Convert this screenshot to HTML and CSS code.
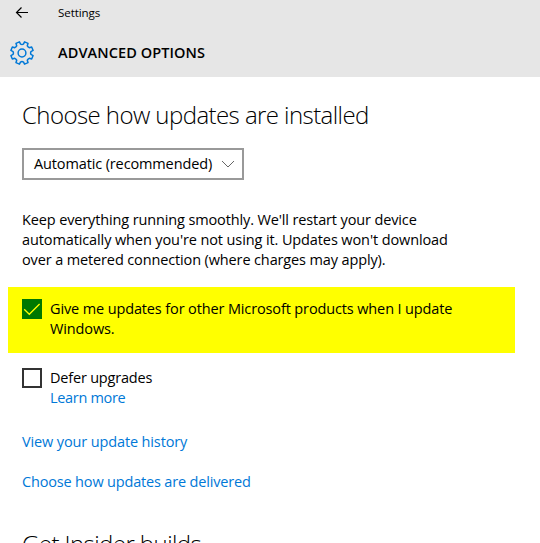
FILE: index.html
```
<!DOCTYPE html>
<html lang="en">
<head>
  <meta charset="UTF-8">
  <meta name="viewport" content="width=device-width, initial-scale=1.0">
  <title>Settings</title>
  <link rel="stylesheet" href="styles.css">
</head>
<body>
  <header class="header">
    <div class="titlebar">
      <svg class="back" width="14" height="12" viewBox="0 0 14 12">
        <path d="M13 5.5H1.5M6.5 0.5L1.5 5.5L6.5 10.5" />
      </svg>
      <span class="app-name">Settings</span>
    </div>
    <div class="page-title">
      <svg class="gear" width="26" height="26" viewBox="-13 -13 26 26">
        <path id="gear-path" d="" />
        <circle r="3.9" />
      </svg>
      <h1>ADVANCED OPTIONS</h1>
    </div>
  </header>

  <main class="content">
    <h2 class="heading-install">Choose how updates are installed</h2>
    <div class="select">
      <span>Automatic (recommended)</span>
      <svg width="14" height="8" viewBox="0 0 14 8">
        <path d="M1 1L7 7L13 1" />
      </svg>
    </div>

    <p class="description">
      Keep everything running smoothly. We'll restart your device<br>
      <span class="line2">automatically when you're not using it. Updates won't download</span><br>
      over a metered connection (where charges may apply).
    </p>

    <div class="option highlight">
      <span class="checkbox checked">
        <svg width="20" height="20" viewBox="0 0 20 20">
          <path d="M2.2 10.2L7.3 15.3L17.6 5" />
        </svg>
      </span>
      <div>Give me updates for other Microsoft products when I update<br>Windows.</div>
    </div>

    <div class="option">
      <span class="checkbox"></span>
      <div class="defer">Defer upgrades<br><a href="#" class="learn">Learn more</a></div>
    </div>

    <a href="#" class="link history">View your update history</a>
    <a href="#" class="link delivery">Choose how updates are delivered</a>

    <h2 class="heading-insider">Get Insider builds</h2>
  </main>

  <script>
    // gear outline
    const teeth = 8;
    const profile = [[-0.5, 8.6], [-0.3, 9], [-0.21, 11.4], [0.21, 11.4], [0.3, 9]];
    const points = [];
    for (let i = 0; i < teeth; i++) {
      for (const [offset, radius] of profile) {
        const angle = (i + 0.5 + offset) * 2 * Math.PI / teeth;
        points.push((radius * Math.sin(angle)).toFixed(2) + ' ' + (-radius * Math.cos(angle)).toFixed(2));
      }
    }
    document.getElementById('gear-path').setAttribute('d', 'M' + points.join('L') + 'Z');
  </script>
</body>
</html>
```
FILE: styles.css
```
* {
  box-sizing: border-box;
}

body {
  margin: 0;
  height: 543px;
  overflow: hidden;
  font-family: "Open Sans", "Noto Sans", sans-serif;
  font-size: 14.5px;
  line-height: 20px;
  letter-spacing: -0.13px;
  color: #000;
  background-color: #fff;
}

svg {
  display: block;
  fill: none;
}

h1, h2, p {
  margin: 0;
}

.header {
  height: 77px;
  background-color: #e6e6e6;
}

.titlebar {
  display: flex;
  align-items: center;
  height: 26px;
  padding-left: 15px;
}

.back {
  stroke: #000;
  stroke-width: 1.2;
}

.app-name {
  margin-left: 29px;
  font-size: 11.6px;
  letter-spacing: -0.1px;
}

.page-title {
  display: flex;
  align-items: center;
  height: 54px;
  padding-left: 9px;
}

.gear {
  stroke: #0078d7;
  stroke-width: 1.5;
  stroke-linejoin: round;
}

h1 {
  margin-left: 23px;
  font-size: 14.5px;
  font-weight: 600;
  letter-spacing: 0.1px;
}

.content {
  display: flex;
  flex-direction: column;
  align-items: flex-start;
  padding: 21px 22px 0;
}

h2 {
  font-size: 24px;
  font-weight: 300;
  line-height: 34px;
  letter-spacing: -0.57px;
  white-space: nowrap;
}

.select {
  display: flex;
  align-items: center;
  justify-content: space-between;
  width: 222px;
  height: 32px;
  margin-top: 16px;
  padding: 0 7px 0 10px;
  border: 2px solid #999;
  white-space: nowrap;
}

.select svg {
  stroke: #666;
}

.description {
  margin-top: 30px;
  white-space: nowrap;
}

.line2 {
  letter-spacing: -0.11px;
}

.option {
  display: flex;
  margin-top: 15px;
  white-space: nowrap;
}

.highlight {
  width: 507px;
  height: 66px;
  margin: 17px 0 0 -14px;
  padding: 12px 14px 0;
  background-color: #ff0;
}

.checkbox {
  width: 20px;
  height: 20px;
  margin-right: 8px;
  border: 2px solid #333;
}

.checked {
  border: none;
  background-color: #007800;
}

.checked svg {
  stroke: #ff0;
  stroke-width: 1.3;
}

a {
  color: #0078d7;
  text-decoration: none;
}

.defer {
  letter-spacing: -0.2px;
}

.learn {
  letter-spacing: -0.32px;
}

.link {
  margin-top: 24px;
  white-space: nowrap;
}

.delivery {
  margin-top: 20px;
  letter-spacing: -0.17px;
}

.heading-insider {
  margin-top: 35px;
}
```
